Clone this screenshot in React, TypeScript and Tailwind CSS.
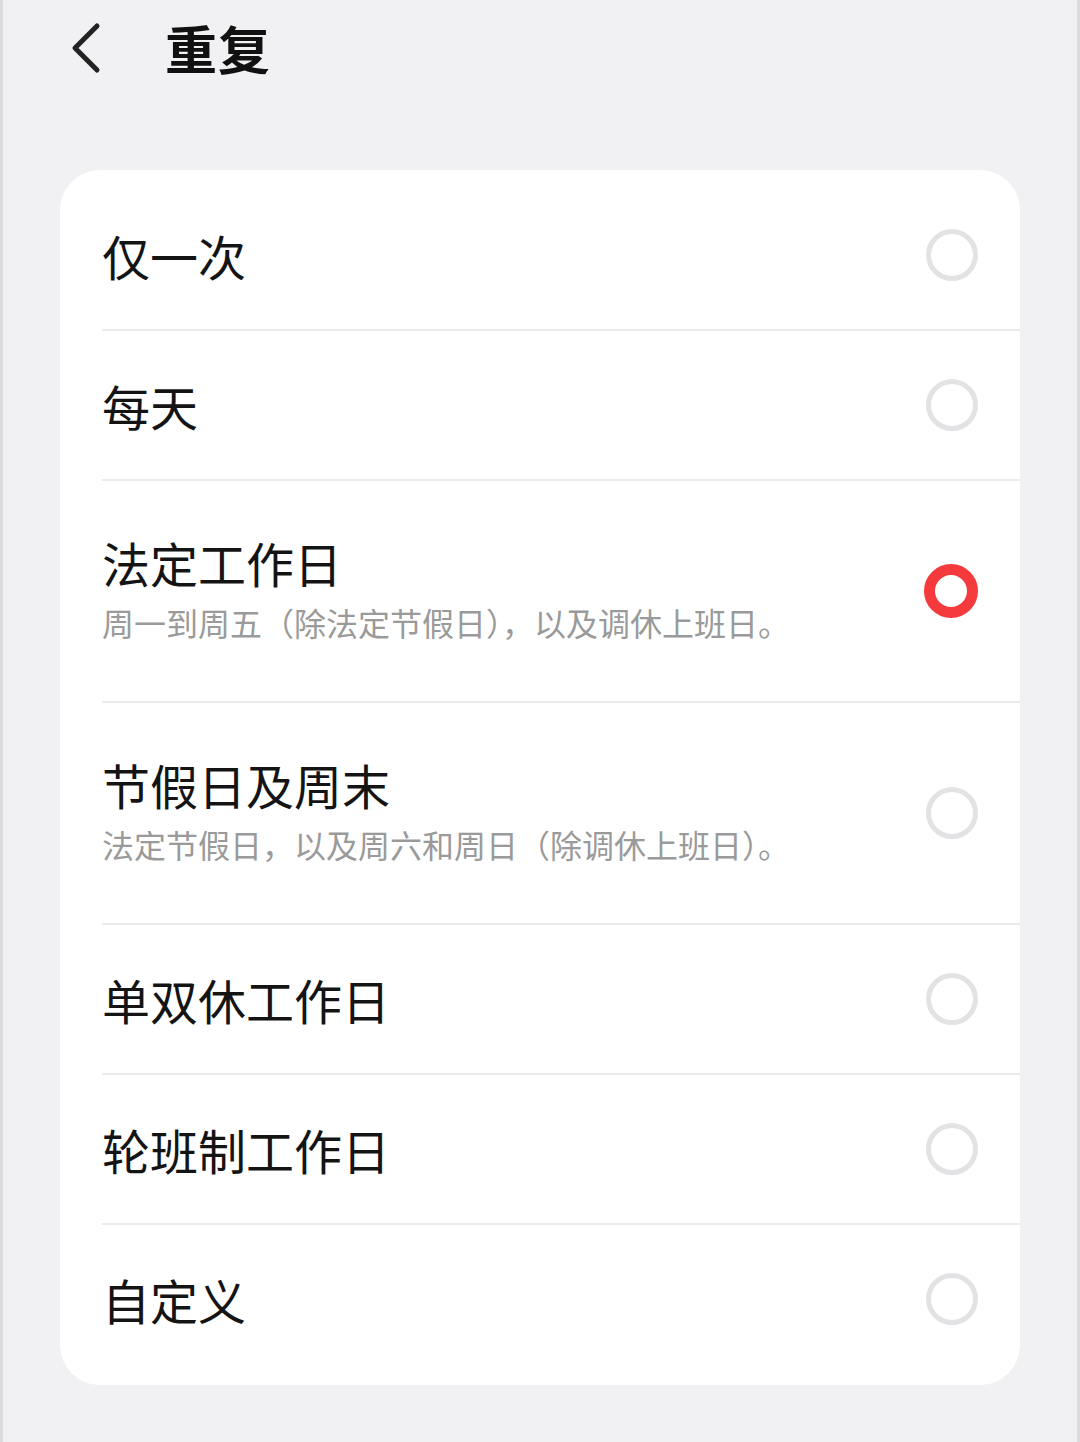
import React, { useState } from "react";

interface Option {
  label: string;
  desc?: string;
}

const OPTIONS: Option[] = [
  { label: "仅一次" },
  { label: "每天" },
  { label: "法定工作日", desc: "周一到周五（除法定节假日），以及调休上班日。" },
  { label: "节假日及周末", desc: "法定节假日，以及周六和周日（除调休上班日）。" },
  { label: "单双休工作日" },
  { label: "轮班制工作日" },
  { label: "自定义" },
];

function Radio({ checked }: { checked: boolean }) {
  return checked ? (
    <div className="w-[54px] h-[54px] rounded-full border-[11px] border-[#f43a3d] bg-white" />
  ) : (
    <div className="w-[52px] h-[52px] rounded-full border-[5px] border-[#e3e3e5] bg-white" />
  );
}

export default function App() {
  const [selected, setSelected] = useState(2);

  return (
    <div
      className="w-[1080px] h-[1442px] bg-[#f1f1f3] border-x-[3px] border-[#dcdcde] overflow-hidden"
      style={{ fontFamily: '"Noto Sans CJK SC", "Noto Sans", sans-serif' }}
    >
      {/* Header */}
      <div className="h-[96px] flex items-center pl-[63px]">
        <svg width="40" height="52" viewBox="0 0 40 52" className="text-[#222]">
          <path d="M31 4 L9 26 L31 48" fill="none" stroke="currentColor" strokeWidth="5" strokeLinecap="round" strokeLinejoin="round" />
        </svg>
        <h1 className="ml-[59px] text-[52px] leading-none font-bold text-[#111] tracking-[1px]">重复</h1>
      </div>

      {/* Card */}
      <div className="mt-[74px] mx-[57px] bg-white rounded-[40px] pt-[11px] pb-[12px]">
        {OPTIONS.map((opt, idx) => (
          <div key={idx} className="pl-[42px]">
            {idx > 0 && <div className="h-[2px] bg-[#ebebed]" />}
            <button
              onClick={() => setSelected(idx)}
              className={`w-full flex items-center justify-between pr-[42px] text-left ${opt.desc ? "h-[220px]" : "h-[148px]"}`}
            >
              <div className="flex flex-col">
                <span className={`text-[48px] leading-none text-[#141414] ${opt.desc ? "mt-[-6px]" : ""}`}>{opt.label}</span>
                {opt.desc && (
                  <span className="mt-[20px] text-[32px] leading-none text-[#9a9a9a]">{opt.desc}</span>
                )}
              </div>
              <Radio checked={selected === idx} />
            </button>
          </div>
        ))}
      </div>
    </div>
  );
}
